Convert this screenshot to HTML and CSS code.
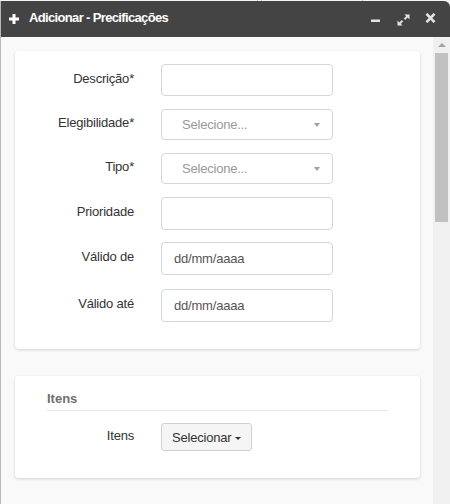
FILE: index.html
```html
<!DOCTYPE html>
<html lang="pt-BR">
<head>
<meta charset="utf-8">
<title>Adicionar - Precificações</title>
<link rel="stylesheet" href="styles.css">
</head>
<body>
<div class="topstrip"><span class="tick t1"></span><span class="tick t2"></span><span class="tick t3"></span></div>
<div class="window">
  <header class="titlebar">
    <svg class="plus" width="10" height="10" viewBox="0 0 10 10"><path d="M3.5 0h3v3.5h3.5v3h-3.5v3.5h-3v-3.5H0v-3h3.5z" fill="#fff"/></svg>
    <span class="title">Adicionar - Precificações</span>
    <div class="controls">
      <svg class="ic-min" width="10" height="10" viewBox="0 0 10 10"><rect x="0" y="5.5" width="9" height="2.5" fill="#e4e4e4"/></svg>
      <svg class="ic-exp" width="13" height="12" viewBox="0 0 13 12"><path d="M12.5 0.5V5.5L10.6 3.6L8.2 6L6.8 4.6L9.2 2.2L7.5 0.5Z" fill="#e4e4e4"/><path d="M0.5 11.5V6.5L2.4 8.4L4.8 6L6.2 7.4L3.8 9.8L5.5 11.5Z" fill="#e4e4e4"/></svg>
      <svg class="ic-close" width="11" height="10" viewBox="0 0 11 10"><path d="M1.5 0.8L9.5 9.2M9.5 0.8L1.5 9.2" stroke="#e4e4e4" stroke-width="2.6"/></svg>
    </div>
  </header>
  <div class="wbody">
    <div class="content">
      <section class="card card-form">
        <div class="row r1">
          <label class="lbl">Descrição*</label>
          <div class="control h32"></div>
        </div>
        <div class="row">
          <label class="lbl">Elegibilidade*</label>
          <div class="control select h31"><span class="ph">Selecione...</span><span class="caret gray"></span></div>
        </div>
        <div class="row">
          <label class="lbl">Tipo*</label>
          <div class="control select h31"><span class="ph">Selecione...</span><span class="caret gray"></span></div>
        </div>
        <div class="row">
          <label class="lbl">Prioridade</label>
          <div class="control h33"></div>
        </div>
        <div class="row r5">
          <label class="lbl">Válido de</label>
          <div class="control date h33">dd/mm/aaaa</div>
        </div>
        <div class="row r6">
          <label class="lbl">Válido até</label>
          <div class="control date h33">dd/mm/aaaa</div>
        </div>
      </section>
      <section class="card card-items">
        <h4 class="legend">Itens</h4>
        <div class="row">
          <label class="lbl">Itens</label>
          <div class="btn">Selecionar<span class="caret dark"></span></div>
        </div>
      </section>
    </div>
    <div class="scrollbar">
      <div class="sb-arrow"></div>
      <div class="sb-thumb"></div>
    </div>
  </div>
</div>
</body>
</html>
```

FILE: styles.css
```css
* { box-sizing: border-box; }
html, body { margin: 0; padding: 0; }
body {
  width: 450px;
  height: 504px;
  overflow: hidden;
  background: #f2f2f2;
  font-family: "Liberation Sans", Arial, sans-serif;
  font-size: 13px;
  letter-spacing: -0.2px;
  color: #333;
}
.topstrip {
  height: 1px;
  background: #f4f4f4;
  display: flex;
}
.tick { width: 1px; height: 1px; background: #c8c8c8; }
.t1 { margin-left: 257px; }
.t2 { margin-left: 3px; }
.t3 { margin-left: 100px; }

.window {
  height: 503px;
  display: flex;
  flex-direction: column;
  border-left: 1px solid #b9b9b9;
}
.titlebar {
  height: 36px;
  flex: none;
  background: #444;
  border-top-right-radius: 6px;
  display: flex;
  align-items: center;
  padding: 0 0 3px 8px;
}
.plus { flex: none; margin-top: 3px; }
.title {
  margin-left: 10px;
  color: #fff;
  font-weight: bold;
  font-size: 13px;
  letter-spacing: -0.65px;
  line-height: 16px;
  padding-top: 1px;
}
.controls {
  margin-left: auto;
  display: flex;
  align-items: center;
  padding-right: 14px;
}
.ic-min { margin-top: 2px; }
.ic-exp { margin-left: 16px; margin-top: 4px; }
.ic-close { margin-left: 15px; margin-top: 1px; }

.wbody {
  flex: 1;
  display: flex;
  background: #f9f9f9;
  min-height: 0;
}
.content {
  flex: 1;
  padding: 14px 13px 0 14px;
  display: flex;
  flex-direction: column;
  gap: 27px;
}
.card {
  background: #fff;
  border-radius: 4px;
  box-shadow: 0 1px 3px rgba(0, 0, 0, 0.16);
}
.card-form {
  padding: 13px 0 27px;
  display: flex;
  flex-direction: column;
  gap: 13px;
}
.r5 { margin-top: -1px; }
.r6 { margin-top: 1px; }

.row {
  display: flex;
  align-items: center;
}
.lbl {
  width: 119px;
  text-align: right;
  line-height: 20px;
  padding-bottom: 3px;
  margin-right: 27px;
  color: #333;
}
.control {
  width: 172px;
  border: 1px solid #d2d6de;
  border-radius: 4px;
  background: #fff;
  display: flex;
  align-items: center;
}
.h31 { height: 31px; }
.h32 { height: 32px; }
.h33 { height: 33px; }
.select { padding-left: 20px; padding-right: 12px; }
.ph { color: #999; }
.date { padding-left: 12px; color: #555; }

.caret {
  width: 0;
  height: 0;
  border-top: 4px solid #999;
  border-left: 3.5px solid transparent;
  border-right: 3.5px solid transparent;
}
.caret.gray { margin-left: auto; margin-top: 1px; border-top-color: #a0a0a0; }
.caret.dark { margin-left: 4px; margin-top: 2px; border-top-color: #333; border-left-width: 3px; border-right-width: 3px; border-top-width: 3.5px; }

.card-items {
  padding: 13px 0 27px;
}
.legend {
  margin: 0 32px 12px;
  font-size: 13px;
  font-weight: bold;
  letter-spacing: 0;
  color: #6f6f6f;
  line-height: 20px;
  padding-bottom: 1px;
  border-bottom: 1px solid #e5e5e5;
}
.btn {
  height: 28px;
  padding: 0 10px;
  border: 1px solid #d0d0d0;
  border-radius: 3px;
  background: #f5f5f5;
  color: #333;
  display: flex;
  align-items: center;
}

.scrollbar {
  width: 17px;
  flex: none;
  background: #f0f0f0;
  display: flex;
  flex-direction: column;
  align-items: center;
}
.sb-arrow {
  margin-top: 6px;
  width: 0;
  height: 0;
  border-bottom: 4px solid #a3a3a3;
  border-left: 4px solid transparent;
  border-right: 4px solid transparent;
}
.sb-thumb {
  margin-top: 6px;
  width: 13px;
  height: 169px;
  background: #c1c1c1;
}
```
